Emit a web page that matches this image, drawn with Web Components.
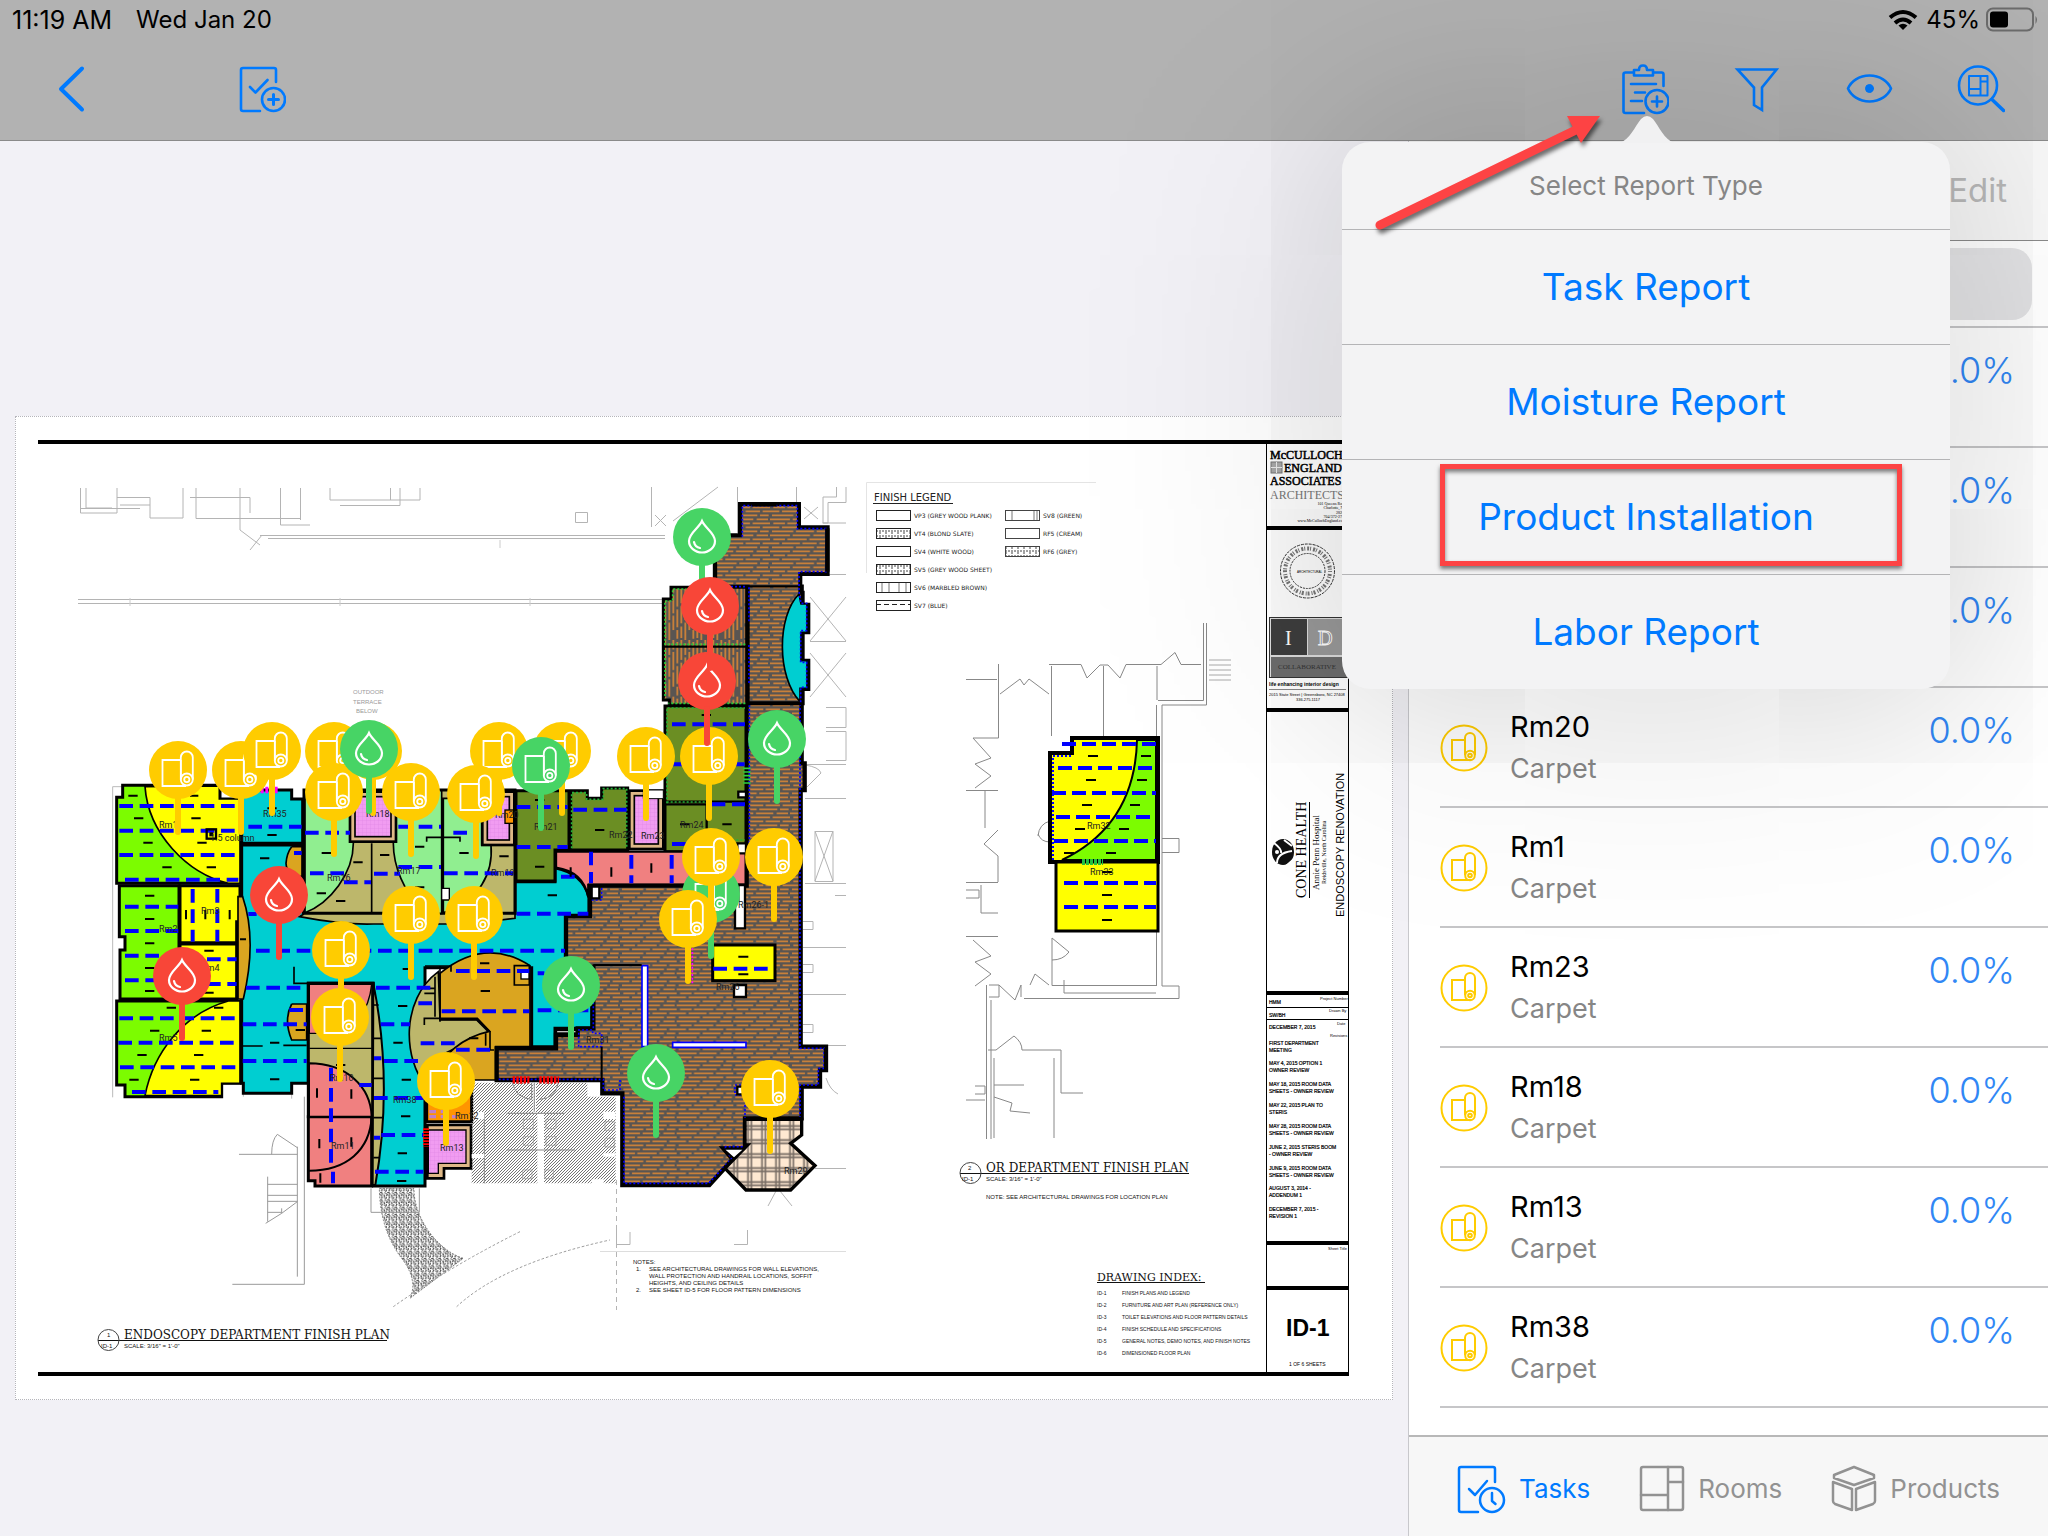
<!DOCTYPE html>
<html lang="en">
<head>
<meta charset="utf-8">
<title>Floor plan tasks</title>
<style>
html,body{margin:0;height:100%}
body{font-family:Inter,"Liberation Sans",sans-serif;background:#f2f1f6;overflow:hidden}
</style>
</head>
<body>
<app-shell></app-shell>
<script>
const define=(name,html,setup)=>customElements.define(name,class extends HTMLElement{
  constructor(){super();this.attachShadow({mode:'open'});}
  connectedCallback(){this.shadowRoot.innerHTML='<style>*,*::after{box-sizing:border-box}button{font:inherit;color:inherit;background:none;border:0;padding:0;margin:0}svg{display:block}</style>'+(typeof html==='function'?html(this):html);if(setup)setup(this);}
});

/* ---------- status bar ---------- */
define('status-bar',`<style>
:host{display:flex;align-items:center;height:40px;padding:0 10px 0 12px;font-size:24px;line-height:40px;color:#000}
.time{font-size:25px}
.date{margin-left:24px}.gap{flex:1}.pct{margin:0 6px 0 8px}
</style>
<span class="time">11:19 AM</span><span class="date">Wed Jan 20</span><span class="gap"></span>
<svg width="30" height="22" viewBox="0 0 30 22" fill="none" stroke="#000" stroke-width="4"><path d="M2 8.5Q15-2.5 28 8.5"/><path d="M7 14Q15 7 23 14"/><path d="M15 21l-4.500-4.500Q15 13 19.500 16.500Z" fill="#000" stroke="none"/></svg>
<span class="pct">45%</span>
<svg width="52" height="26" viewBox="0 0 52 26"><rect x="1" y="1.500" width="46" height="22" rx="6" fill="none" stroke="#6c6c6c" stroke-width="2"/><rect x="4" y="4.500" width="18" height="16" rx="3"/><path d="M49.500 9q3 3.500 0 8z" fill="#6c6c6c"/></svg>`);

/* ---------- tool bar ---------- */
define('tool-bar',`<style>
:host{display:flex;align-items:center;height:101px;padding:0 43px 2px 49px;border-bottom:1px solid #8a8a8a}
button{width:48px;height:56px}
button+button{margin-left:64px}
.add{margin-left:141px!important}.gap{flex:1}.rep{margin-left:0!important}
svg{fill:none;stroke:#007aff;stroke-width:2.6;stroke-linejoin:round;stroke-linecap:round}
</style>
<button aria-label="Back"><svg width="48" height="56" viewBox="50 61 48 56" stroke-width="4"><path stroke-width="4" d="M83 68.500 62 89l21 20.500"/></svg></button>
<button class="add" aria-label="Add task"><svg width="48" height="56" viewBox="238 61 48 56"><path d="M276 82V70q0-2-2-2H243q-2 0-2 2v39q0 2 2 2h17M250 87l5.500 5.500L267.500 80"/><circle cx="273.500" cy="99.500" r="11.500"/><path d="M273.500 94.500v10M268.500 99.500h10" stroke-width="3"/></svg></button>
<span class="gap"></span>
<button class="rep" aria-label="Create report"><svg width="48" height="56" viewBox="1621 61 48 56"><path d="M1634 72.500h-8.500q-2 0-2 2V111q0 2 2 2h18.500M1654 72.500h7.500q2 0 2 2V86M1634 70h5q0-4.500 4-4.500t4 4.500h6v5.500h-19zM1631 84h25M1635 92.500h10M1631 101h11"/><circle cx="1657" cy="101.500" r="11.500"/><path d="M1657 96.500v10M1652 101.500h10"/></svg></button>
<button aria-label="Filter"><svg width="48" height="56" viewBox="1733 61 48 56"><path stroke-linejoin="miter" d="M1737.500 69.500h39L1762 87.500V110l-8-5V87.500z"/></svg></button>
<button aria-label="Visibility"><svg width="48" height="56" viewBox="1845 61 48 56"><path d="M1848 88.500c3-7 11-13 21.500-13s18.500 6 21.500 13c-3 7-11 13-21.500 13s-18.500-6-21.500-13z"/><circle cx="1869.500" cy="88.500" r="4" fill="#007aff" stroke-width="1"/></svg></button>
<button aria-label="Search plan"><svg width="48" height="56" viewBox="1957 61 48 56"><circle cx="1978" cy="85.500" r="19"/><path d="m1992 99.500 11.500 11" stroke-width="3.500"/><path stroke-width="2" d="M1969 76h18.500v19.500H1969zM1980.500 76v19.500M1969 89h11.500M1980.500 81.500h7"/></svg></button>`);

/* ---------- floor plan ---------- */
const T=(x,y,s,t,a='')=>`<text x="${x}" y="${y}" font-size="${s}" ${a}>${t}</text>`;
/* glyph, colour, x, y — in stacking order; "s" redraws only the stem */
const pins=[
'd g 702 537','d r 707 681','r y 178 770','r y 241 770','r y 272 751','r y 334 751','r y 373 751','r y 334 792','r y 411 792','d g 369 749',
'r y 499 751','r y 562 751','r y 476 794','r g 541 766','r y 646 756','r y 709 756','d g 777 739','r g 711 894','r y 711 857','r y 688 919','r y 774 857',
'r y 411 915','r y 474 915','d r 279 895','d r 182 976','r y 341 950','r y 340 1017','r y 446 1081','d g 571 985','d g 656 1073','r y 770 1089','s r 707 681','d r 710 606'
].map(p=>p.split(' '));
const pinColor={g:'#47d465',r:'#f84638',y:'#ffcc00'};
const pinSvg=pins.map(([k,c,x,y])=>{
  const col=pinColor[c],stem=`<path d="M0 28V62" stroke="${col}" stroke-width="6" stroke-linecap="round"/>`;
  const glyph=k==='r'?'<use href="#roll"/>':'<use href="#drop"/>';
  return `<g transform="translate(${x} ${y})">${stem}${k==='s'?'':`<circle r="29" fill="${col}"/>${glyph}`}</g>`;
}).join('');
const pink=(x,y,w,h)=>`<rect x="${x}" y="${y}" width="${w}" height="${h}" fill="#deb887" stroke="#000" stroke-width="8"/><rect x="${x+15}" y="${y+15}" width="${w-30}" height="${h-30}" fill="url(#pk)" stroke="#000" stroke-width="5"/>`;

/* rooms are drawn at three units per sheet pixel */
const rooms=`<g transform="translate(90 700) scale(.33333)" stroke-linejoin="miter">
<g fill="none" stroke="#bbb" stroke-width="3"><path d="M68 260V1192M68 260H180M460 1150V1190M605 1180V1196"/></g>
<g stroke="#000" stroke-width="9">
<path fill="#00ced1" d="M455 435H640V640H1275V545H1395V503Q1480 520 1497 592V648H1428V800H1505V985H1395V1040H1325V803H1005V1458H850V850H655V1150H605V1180H460V1150H455Z"/>
<path fill="#7cfc00" d="M98 256H390V297H450V550H80V292H98Z"/><path fill="#ff0" d="M165 260C175 400 290 520 415 550H450V297H388V258Z" stroke-width="5"/>
<path fill="#7cfc00" d="M88 557H267V897H90V750H105V710H88Z"/>
<path fill="#ff0" d="M270 557H450V665H440V728H270ZM270 732H440V897H270Z"/>
<path fill="#7cfc00" d="M90 903H450V1150H395V1190H105V1155H80V903Z"/><path fill="#ff0" d="M165 1187C190 1060 280 940 415 903H450V1150H395V1187Z" stroke-width="5"/>
<path fill="#00ced1" d="M455 298V270H605V297H638V430H455Z"/>
<path fill="#bdb76b" d="M642 270H1275V640H642Z"/>
<path fill="#bdb76b" d="M628 650Q760 675 850 672H1130L1275 655V642H642Z" stroke-width="5"/>
<path fill="#90ee90" stroke-width="5" d="M645 272H790V430C790 520 720 610 645 638ZM915 272H1055V640H1000C940 570 910 500 910 430ZM1060 295H1175V435H1203C1210 520 1170 600 1060 638Z"/>
<path fill="none" stroke-width="5" d="M845 430V640M1010 425V412H1110V425"/>
<path fill="#fff" stroke-width="4" d="M1055 565H1078V600H1055Z"/>
<path fill="#daa520" stroke-width="5" d="M605 440H636V530Q590 530 588 490 590 460 605 440M444 590H458Q502 720 460 897H444ZM605 912H650V1020H605Q580 960 605 912"/>
<path fill="#bdb76b" d="M655 850H848V1250H655Z"/><path fill="#f08080" stroke-width="4" d="M658 853H845Q835 950 760 1000H658Z"/>
<path fill="#f08080" d="M655 1250H845V1458H675V1442H655Z"/><path fill="#f08080" stroke-width="6" d="M657 1090C770 1090 842 1160 845 1250H657Z"/><path fill="none" stroke-width="6" d="M845 1250C840 1350 770 1412 657 1412"/>
<path d="M658 1045H845" stroke-width="4"/>
<path fill="#bdb76b" stroke-width="6" d="M850 850Q910 1150 856 1455H848Z"/><path stroke-width="5" d="M850 915h16M850 1015h25M850 1135h30M850 1253h27M850 1373h20"/>
<path fill="#bdb76b" stroke-width="5" d="M1045 815C930 900 940 1080 1010 1160L1065 1060 1195 995 1160 960H1050Z"/>
<path fill="#daa520" stroke-width="5" d="M1050 820Q1185 710 1320 797V1040H1217V1140H1020Q1080 1020 1198 994L1160 958H1050Z"/>
<path fill="none" stroke-width="5" d="M1005 798H1083V815M1003 975V955H1162L1200 995V1050H1212M1035 830V950M1050 800V965M1187 1037V1000M1273 797H1318V855H1273ZM1003 880h30M1003 865h30M612 800V850H655M458 1038h60M580 1036h70"/>
<rect x="1293" y="815" width="24" height="22" fill="#fff" stroke-width="4"/>
<path fill="#ff9500" d="M1010 1150H1145V1265H1010Z"/><path fill="none" stroke="#c080c8" stroke-width="10" stroke-dasharray="20 14" d="M1018 1250H1100M1018 1235H1070"/>
<path fill="#deb887" stroke-width="8" d="M1012 1275H1143V1405H1062V1435H1012Z"/><path fill="url(#pk)" stroke-width="4" d="M1015 1290H1128V1390H1045V1420H1015Z"/>
${pink(780,275,138,150)}${pink(1177,275,96,160)}<rect x="1245" y="330" width="26" height="40" fill="#ff9500" stroke-width="4"/>
</g>
<g transform="translate(1080 0)" stroke="#000" stroke-width="9">
<path fill="#6b8e23" d="M198 272H357V450H315V543H198ZM362 272H412V295H455V264H533V450H362ZM645 18H890V455H645Z"/>
<path fill="#f08080" d="M318 455H890V555H415V592Q400 515 318 503Z" stroke-width="7"/>
<path fill="none" stroke-width="7" d="M645 313H770V450M645 305H888"/>
${pink(538,272,102,175)}<path fill="#fff" stroke-width="3" d="M580 270H640V296H580Z"/>
<path fill="url(#wood)" stroke-width="13" d="M890-340H1055V190H1064V270H1052V1040H1128V1110H1110V1160H1055V1255H885V1345H820L848 1378 778 1455H517V1180H457V1140H140V1045H318V1005H383V985H430V800H348V648H420V557H890Z"/>
<path fill="none" stroke="#00f" stroke-width="5" stroke-dasharray="6 6" d="M898-340V-30M1050-300V1045H1122V1105H1105V1155H1050V1250M885 1155H855V1185H885V1340H822L845 1376 776 1450H522V1185M510 1140V1170H460V1138H145M386 1040V990H428V1000H455V1040H386M898 465V10M425 600H455V560M430 985V890"/>
<path fill="#fff" stroke-width="7" d="M425 560H448V595H425ZM852 855H888V891H852ZM865 555H885V685H855V600H865ZM865 275H888V292H865ZM862 430H888V460H862ZM318 990H380V1000H318ZM862 1160H885V1183H862Z"/>
<path fill="#fff" stroke="#00f" stroke-width="5" d="M576 797H593V1040H576ZM668 1027H888V1042H668Z"/>
<rect x="788" y="735" width="187" height="107" fill="#ff0"/>
<path fill="url(#plaid)" stroke-width="10" d="M885 1258H1055V1305L1022 1330 1095 1397 1022 1470H888L825 1405 893 1335H885Z"/>
<path fill="#fff" stroke-width="5" d="M820 1347H883L852 1375Z"/>
<path fill="none" stroke-width="6" d="M430 795H575M455 1040V1140M1125 1045V1110"/>
<path fill="none" stroke="#22b33a" stroke-width="5" stroke-dasharray="6 6" d="M651 310V24H885M365 445V278H410V298H460V266H530V445M650 306H770M775 420H885"/>
<path fill="none" stroke="#2bd13f" stroke-width="5" d="M880 205h22M880 216h22M880 227h22M880 238h22M880 249h22"/>
<path stroke="#f0f" stroke-width="5" stroke-dasharray="6 5" d="M727 745V852"/>
<path stroke="red" stroke-width="22" stroke-dasharray="7 4" d="M188 1140H238M268 1140H327"/>
<path fill="url(#hatch)" stroke="none" d="M65 1148H250V1238H262V1450H65ZM258 1148H412V1190H497V1450H282V1240H258Z"/>
<path fill="none" stroke="#888" stroke-width="3" d="M170 1240H345M170 1350H375M103 1240V1450M253 1148V1235M187 1150Q200 1195 245 1198V1150M325 1150Q315 1195 270 1198"/>
<path fill="none" stroke="#999" stroke-width="2" d="M220 1258h30v28h-30zM288 1258h30v28h-30zM220 1310h30v26h-30zM288 1310h30v26h-30zM465 1265h28v26h-28zM465 1315h28v26h-28zM218 1410h28v26h-28zM284 1410h26v26h-26z"/>
<path fill="#fff" stroke="none" d="M75 1236h28v22H75zM65 1362h38v12H65zM460 1235h36v22h-36zM460 1360h36v10h-36zM425 1438h36v14h-36z"/>
</g>
<g transform="translate(1530 -690)" stroke="#000" stroke-width="12">
<path fill="url(#wood)" d="M420 102H597V172H683V312H601V368H608V404H625V487H608V572H625V657H608V700H443V350H345V196H420Z"/>
<path fill="url(#woodv)" d="M213 352H440V705H208V690H190V387H213Z" stroke-width="9"/>
<path d="M190 530H440M345 349H600" stroke-width="7"/>
<path fill="#00ced1" stroke-width="5" d="M597 372C530 440 530 620 600 695V655H621V572H603V487H621V402H603Z"/>
<path fill="none" stroke="#00f" stroke-width="5" stroke-dasharray="6 6" d="M427 200V107H592V176H678V305H597V365L603 400H620V482H602V577H620V652H602V700M447 352V460M447 525V640M345 350H440"/>
<path fill="none" stroke="#22d13a" stroke-width="5" stroke-dasharray="6 6" d="M436 523H195V393H218V357H260M436 700H205M195 540V685"/>
<path d="M682 175V305M345 280V345M455 103H530" stroke-width="13"/>
</g>
<path fill="none" stroke="#00f" stroke-width="12" stroke-dasharray="41 20" d="M88 318H445M88 392H445M88 465H445M105 539H445M105 620H265M105 693H265M105 767H265M105 841H265M308 567V725M382 567V725M290 778H440M290 852H440M88 955H448M85 1028H448M90 1102H448M126 1176H385M475 380H635M612 459H635M645 398H780M660 520H775M762 547H843M852 521H930M925 380H1053M925 501H1053M1062 520H1270M1090 398H1160M475 642H500M1280 641H1495M498 752H1425M468 863H650M858 863H1040M598 930H650M458 973H650M458 1083H650M872 973H960M1098 813H1318M1055 934H1318M985 910H1030M992 1030H1100M1098 1049H1216M882 1083H985M852 1194H1000M874 1305H1000M855 1415H1000M723 1103V1400M729 1415V1450M808 1155H845M852 1075h22M852 1313h18M1280 321H1433M1280 441H1433M1450 329H1610M1746 73H1965M1740 193H1965M1865 313H1965M1746 432H1800M1503 455V550M1624 465V550M1745 465V550M1343 820H1363M1343 931H1495M1413 530H1460M1870 806H2052"/>
<path fill="none" stroke="#000" stroke-width="6" d="M115 287h28M300 287h25M132 355h28M304 355h28M160 428h28M322 428h28M217 502h28M350 502h28M165 587h28M165 657h28M165 730h28M165 804h28M165 873h28M288 630v28M346 630v28M419 630v28M343 752h28M343 878h28M230 923h28M372 923h28M180 992h28M335 992h28M142 1065h28M312 1065h28M118 1139h28M300 1139h28M532 325h28M532 405h28M510 475h28M695 459h28M680 580h28M790 487h28M738 603h28M870 465h28M975 440h28M975 562h28M1108 459h28M1228 469h28M450 718h18M617 990h28M540 1028h28M540 1138h28M938 807h28M924 918h28M910 1028h28M935 1139h28M933 1249h28M923 1360h28M921 1443h28M681 1165v28M784 1168v28M688 1317v28M784 1312v28M691 1420v28M1170 790h28M1172 873h28M1137 1015h28M738 1095h28M1335 300h28M1335 500h28M1373 586h28M1515 390h28M1835 45h28M1897 373h28M1770 373h28M1564 502v28M1684 490v28M1442 502v28M1945 770h30M1945 823h30"/>
<rect x="350" y="388" width="28" height="28" fill="none" stroke="#000" stroke-width="7"/><path d="M358 397h12v12h-12z"/>
<path stroke="#f0f" stroke-width="20" stroke-dasharray="9 5" d="M512 270H565"/><path stroke="red" stroke-width="18" stroke-dasharray="5 4" d="M1008 1285V1340"/>
<g transform="translate(0 1050)" fill="none" stroke="#999" stroke-width="3">
<path fill="url(#speck)" stroke="#777" stroke-dasharray="5 5" d="M868 415H972C970 500 1040 600 1120 625L960 745Q985 690 935 625 870 540 868 415Z"/>
<path d="M643 140V703H427M622 290V680M447 313H622M545 313Q545 270 562 253L622 293M533 380V515M533 403H622M533 436H622M533 454H622M527 520 575 490V475M575 490 622 455M533 487H575M843 415V487H988V415"/>
<path stroke-dasharray="8 6" d="M910 770Q1080 650 1290 545M1100 770Q1240 640 1560 570"/>
</g>
</g>`;

const plan2=`<g fill="none" stroke="#888" stroke-width="1">
<path d="M998.500 664V738H973M966 679.500H997M1000 694l20-15 4 6 5-6 20 15M1049 664.500H1081L1087 678 1100 665H1108L1120 678 1126 664.500H1161l14-12 6 12h20M1051.500 666V736M1103.500 666V737M1157 666V700M1203.500 623V700.500H1158M1206.500 623V705H1162V986H1179V998.500H1024M1156.500 705V738M1156.500 932V986M1162 838.500h17v14h-17M973 738l18 20-16 6 16 12-16 12M966 790.500h32M985 791v37M998 830l-14 14 14 12v26M966 882.500h32M966 890h13v8h-13M981 885v28h17M966 936.500h32M973 940l18 16-16 6 16 12-16 12M986.500 985V1139M991 1000V1139M989 985h10v12h-10M999 985 1015 1000 1021 985V997M1030 985l5-11 14 11M1052 938V985.500H1156M1052 938l17 14q-6 8-17 8M1064 980v13h92M988 1050h8l18-14q8 6 8 14h39v43h22M1054 1058v80M994 1058v80M994 1085h30M966 1100h19M994 1097l18 6-2 8 20 2M975 1086h10v8h-10M1038 836q1-12 12-15M1038 834q3 8 12 8"/>
<path stroke="#aaa" d="M1209 660h22M1209 665h22M1209 670h22M1209 675h22M1209 680h22"/></g>
<path fill="#ff0" stroke="#000" stroke-width="4" d="M1072 738H1158V862H1050V753H1072Z"/><path fill="#7cfc00" stroke="#000" stroke-width="2" d="M1137 740H1156V860H1062Q1135 825 1137 740"/>
<path fill="#ff0" stroke="#000" stroke-width="3" d="M1056 862H1158V931H1056Z"/>
<path stroke="#00f" stroke-width="4" stroke-dasharray="14 6" d="M1062 744H1156M1058 768H1156M1052 793H1156M1056 817H1156M1054 841H1156M1064 883H1156M1064 907H1156"/>
<path fill="none" stroke="#00f" stroke-width="2" stroke-dasharray="2 2" d="M1053 860V756H1073"/><path d="M1082 862H1103" stroke="#22c040" stroke-width="6" stroke-dasharray="3 1"/>
<path stroke="#000" stroke-width="2" d="M1088 756h10M1141 756h10M1086 780h10M1137 780h10M1082 805h10M1130 805h10M1075 829h10M1119 829h10M1064 853h10M1106 853h10M1102 872h10M1102 895h10M1102 920h10"/>`;

const linework=`<g fill="none" stroke="#b4b4b4" stroke-width="1">
<path d="M80.500 488V513H117V488M86 488V508H112M117 497.500H150V518H183V488M120 505H150M190 497.500H250V513M196 488V518.500H300M240 488V530L260 545M280.500 488V525H310M80 508.500H140M300.500 488V520M330 488V500H420V488M340 505.500H400V488M260 535.500H665M268 538.500H665M250 550 262 535M575.500 512.500h12v10h-12zM390.500 488V500M78 599.500H662M78 603.500H662"/>
<path stroke="#ccc" d="M500 540v8M130 598v8M340 598v8M530 598v8"/>
<path d="M651.500 487V527M737.500 487V533M673 521 718 487M655 515l11 11M666 515l-11 11M796.500 487V520M804 507l14 12M818 507l-14 12M822.500 523H828V502.500H846V487M836.500 487V497H823V523H846M828 574.500H846M810 597l36 44M846 597l-36 44M810 641.500h36M810 653l36 44M846 653l-36 44M826 707.500h20v20h-20M826 731.500h20v29h-20M805 764.500H846M805 765q14 2 16 8l-14 14M805 798.500H846M815 831.500h18v50h-18zM815 831l18 50M833 831l-18 50M805 883.500H846M835 895.500H846M803 921.500h10v8h-10M803 947.500H846M803 964.500h10v8h-10M803 994.500H846M803 1024.500h10v8h-10M803 1045.500H846M826 1078q4 12 12 16M815 1168.500H846M768 1206l8-15M792 1206l-12-15"/>
<path d="M616.500 1230V1244.500H630V1232M734 1244.500h13.500V1230"/><path stroke="#ddd" d="M600 1251.500H846"/><path stroke-dasharray="5 4" d="M616.500 1180V1310"/>
</g>`;

const legend=[['VP3 (GREY WOOD PLANK)','sp'],['VT4 (BLOND SLATE)','sk'],['SV4 (WHITE WOOD)',''],['SV5 (GREY WOOD SHEET)','sk'],['SV6 (MARBLED BROWN)','v'],['SV7 (BLUE)','h']]
 .map(([t,k],i)=>{const y=511+i*18;return `<rect x="876.500" y="${y-.5}" width="34" height="10" fill="${k==='sk'?'url(#speck2)':'none'}" stroke="#222"/>`+(k==='h'?`<path d="M876 ${y+3.5}h34" stroke="#222" stroke-dasharray="5 3"/>`:k==='v'?`<path d="M882 ${y}v9M889 ${y}v9M899 ${y}v9M906 ${y}v9" stroke="#777"/>`:'')+T(914,y+7,6,t);}).join('')
 +['SV8 (GREEN)','RF5 (CREAM)','RF6 (GREY)'].map((t,i)=>{const y=511+i*18;return `<rect x="1005.500" y="${y-.5}" width="34" height="10" fill="${i===2?'url(#speck2)':'none'}" stroke="#444"/>`+(i===0?`<path d="M1012 ${y}v9M1034 ${y}v9M1037 ${y}v9" stroke="#777"/>`:'')+T(1043,y+7,6,t);}).join('');

const labels=[['Rm1',159,828],['1.5 column',210,841],['Rm2',159,932],['Rm3',201,914],['Rm4',201,971],['Rm5',159,1041],['Rm35',263,817],['Rm18',366,817],['Rm16',327,881],['Rm17',397,874],['Rm10',330,1081],['Rm11',331,1149],['Rm38',393,1103],['Rm12',455,1119],['Rm13',440,1151],['Rm19',491,876],['Rm20',495,818],['Rm21',534,830],['Rm22',609,838],['Rm23',641,839],['Rm24',680,828],['Rm26-1',738,908],['Rm26',716,990],['Rm31',586,1043],['Rm29',784,1174],['Rm32',1087,829],['Rm33',1090,875]]
 .map(([t,x,y])=>T(x,y,9,t,'font-family="Roboto,sans-serif" fill="#222"')).join('');

const dates=[['HMM',1004],['SW/BH',1017],['DECEMBER 7, 2015',1029],['FIRST DEPARTMENT',1045],['MEETING',1052],['MAY 4, 2015  OPTION 1',1065],['OWNER REVIEW',1072],['MAY 18, 2015  ROOM DATA',1086],['SHEETS - OWNER REVIEW',1093],['MAY 22, 2015  PLAN TO',1107],['STERIS',1114],['MAY 28, 2015  ROOM DATA',1128],['SHEETS - OWNER REVIEW',1135],['JUNE 2, 2015  STERIS BOOM',1149],['- OWNER REVIEW',1156],['JUNE 9, 2015  ROOM DATA',1170],['SHEETS - OWNER REVIEW',1177],['AUGUST 3, 2014 -',1190],['ADDENDUM 1',1197],['DECEMBER 7, 2015 -',1211],['REVISION 1',1218]]
 .map(([t,y])=>T(1269,y,5,t,'stroke="#000" stroke-width=".2"')).join('');

const block=`<g stroke="#000" fill="none"><path stroke-width="4" d="M38 442H1349M38 1374H1349M1266 528H1349M1266 710H1349M1266 993H1349M1266 1243H1349M1266 1288H1349"/><path d="M1266.500 442V1375M1348.500 442V1375M1267 1007.500H1348M1267 1019.500H1348"/></g>
<g font-family="'Liberation Serif',serif" stroke="#000" stroke-width=".5">${T(1270,459,12,'McCULLOCH')}${T(1284,472,12,'ENGLAND')}${T(1270,485,12,'ASSOCIATES')}</g>${T(1270,499,12,'ARCHITECTS','font-family="Liberation Serif" fill="#777"')}
<rect x="1271" y="462" width="11" height="11" fill="#aaa" stroke="#777"/><path d="M1276.500 462v11M1271 467.500h11" stroke="#eee"/>
<g font-family="'Liberation Serif',serif" text-anchor="end">${T(1346,505,4,'101 Queens Road')}${T(1346,509,4,'Charlotte, NC')}${T(1346,514,4,'28204')}${T(1346,518,4,'704/372-2740')}${T(1346,522,4,'www.McCullochEngland.com')}</g>
<g fill="none" stroke="#333"><circle cx="1307.500" cy="571" r="27" stroke-dasharray="3 1"/><circle cx="1307.500" cy="571" r="22.500" stroke-width="4" stroke="#777" stroke-dasharray="1 2 2 1"/><circle cx="1307.500" cy="571" r="17.500" stroke-dasharray="2 1"/></g>${T(1297,573,3,'ARCHITECTURAL')}
<rect x="1269.500" y="617.500" width="79" height="60" fill="#ddd" stroke="#333"/><rect x="1271" y="619" width="36" height="36" fill="#3e3e3e"/><rect x="1308" y="619" width="40" height="36" fill="#9a9a9a"/><rect x="1271" y="657" width="77" height="20" fill="#6d6d6d"/>
<g font-family="'Liberation Serif',serif">${T(1285,645,20,'I','fill="#fff"')}${T(1318,645,20,'D','fill="#777" stroke="#fff"')}${T(1278,669,7,'COLLABORATIVE','fill="#333"')}</g>
${T(1269,686,5,'life enhancing interior design','font-family="Liberation Sans" font-weight="bold"')}<path d="M1269 689.500h77" stroke="#888"/>${T(1269,696,4,'2015 State Street | Greensboro, NC 27408')}${T(1296,701,4,'336.275.1117')}
<g font-family="'Liberation Serif',serif"><text transform="translate(1306 898) rotate(-90)" font-size="14">CONE HEALTH</text><text transform="translate(1319 890) rotate(-90)" font-size="9">Annie Penn Hospital</text><text transform="translate(1326 884) rotate(-90)" font-size="6">Reidsville, North Carolina</text></g><path d="M1309.500 802V898" stroke="#000"/>
<text transform="translate(1344 917) rotate(-90)" font-size="11" font-family="Liberation Sans">ENDOSCOPY RENOVATION</text>
<ellipse cx="1283" cy="852" rx="11" ry="13" fill="#111"/><path d="M1274 843q8 6 7 10M1277 863q0-10 15-12M1284 840l8 6M1286 866l8-7" stroke="#fff" stroke-width="2" fill="none"/><circle cx="1277" cy="852" r="2" fill="#fff"/>
<g font-family="'Liberation Sans',sans-serif">${dates}${T(1320,1000,4,'Project Number')}${T(1329,1012,4,'Drawn By')}${T(1337,1025,4,'Date')}${T(1330,1037,4,'Revisions')}${T(1328,1250,4,'Sheet Title')}
${T(1286,1336,23,'ID-1','font-weight="bold"')}${T(1289,1366,5,'1  OF  6  SHEETS')}</g>`;

const index=['FINISH PLANS AND LEGEND','FURNITURE AND ART PLAN (REFERENCE ONLY)','TOILET ELEVATIONS AND FLOOR PATTERN DETAILS','FINISH SCHEDULE AND SPECIFICATIONS','GENERAL NOTES, DEMO NOTES, AND FINISH NOTES','DIMENSIONED FLOOR PLAN']
 .map((t,i)=>T(1097,1295+i*12,5,'ID-'+(i+1))+T(1122,1295+i*12,5,t)).join('');

define('floor-plan',`<style>:host{display:block}svg{width:100%;height:auto;background:#fff;outline:1px dotted #b5b5bb;outline-offset:-1px}</style>
<svg viewBox="15 416 1378 984" role="img" aria-label="Finish plan" font-family="'Liberation Sans',sans-serif">
<defs>
<pattern id="wood" width="170" height="48" patternUnits="userSpaceOnUse"><rect width="170" height="48" fill="#595552"/><path stroke="#c9803a" stroke-width="5.500" d="M0 4H60M68 4H120M130 4H164M10 16H45M52 16H110M118 16H170M0 28H28M36 28H90M97 28H140M148 28H170M6 40H70M78 40H132M140 40H166"/></pattern>
<pattern id="woodv" width="48" height="170" patternUnits="userSpaceOnUse"><rect width="48" height="170" fill="#595552"/><path stroke="#c9803a" stroke-width="5.500" d="M4 0V60M4 68V120M4 130V164M16 10V45M16 52V110M16 118V170M28 0V28M28 36V90M28 97V140M40 6V70M40 78V132M40 140V166"/></pattern>
<pattern id="plaid" width="42" height="42" patternUnits="userSpaceOnUse" x="8" y="14"><rect width="42" height="42" fill="#ffe9d2"/><path d="M4 0V42M14 0V42M0 4H42M0 14H42" stroke="#554c48" stroke-width="5" opacity=".8"/></pattern>
<pattern id="pk" width="12" height="12" patternUnits="userSpaceOnUse"><rect width="12" height="12" fill="#f19cf1"/><path d="M0 0H12M0 0V12" stroke="#e088e4" stroke-width="2"/></pattern>
<pattern id="hatch" width="9" height="9" patternUnits="userSpaceOnUse"><path d="M-1 10 10-1" stroke="#555" stroke-width="2.500"/></pattern>
<pattern id="speck" width="22" height="22" patternUnits="userSpaceOnUse"><path d="M2 3h3M9 1v4M15 5h4M4 10l3 2M12 10h3M19 12v4M1 17h4M9 16l3 3M15 19h4M13 14v2M6 6h3M17 1h3M8 13h2M2 21h3M16 9l2 2" stroke="#111" stroke-width="3"/></pattern>
<pattern id="speck2" width="6" height="5" patternUnits="userSpaceOnUse"><path d="M0 1h2M3 3h2M4 0v2" stroke="#444"/></pattern>
<g id="roll" fill="none" stroke="#fff" stroke-width="1.800"><path d="M3-10H-15.500V16H8M3-10V9M2.800 9.500V-12.500a6 6 0 0 1 12 0V9.500"/><circle cx="8.800" cy="9.500" r="6"/><circle cx="8.800" cy="9.500" r="2.600"/></g>
<g id="drop" fill="none" stroke="#fff" stroke-width="2.200" stroke-linecap="round"><path d="M0-16C3-9 13-4 13 4A13 11.500 0 0 1-13 4C-13-4-3-9 0-16Z" /><path d="M-8 5Q-7 10-2 11"/></g>
</defs>
${linework}${rooms}${plan2}
<g>${T(353,694,6,'OUTDOOR','fill="#999"')}${T(353,704,6,'TERRACE','fill="#999"')}${T(356,713,6,'BELOW','fill="#999"')}</g>
<path d="M866.500 573V482.500H1096" fill="none" stroke="#e4e4e4"/>
<g font-family="'DejaVu Sans',sans-serif" fill="#222">${T(874,501,10,'FINISH LEGEND')}${legend}</g><path d="M873 503.500h80" stroke="#222"/>
<g fill="#111"><g font-family="'DejaVu Serif',serif">${T(986,1172,12,'OR DEPARTMENT FINISH PLAN')}${T(124,1339,12,'ENDOSCOPY DEPARTMENT FINISH PLAN')}${T(1097,1281,11,'DRAWING INDEX:')}</g>
<path d="M960 1173.500H1189M98 1340.500H387M1097 1282.500h108" stroke="#111"/><g fill="none" stroke="#444"><circle cx="970.500" cy="1173" r="10.500"/><circle cx="108.500" cy="1340" r="10.500"/></g>
${T(968,1170,6,'2')}${T(962,1181,6,'ID-1')}${T(107,1337,6,'1')}${T(101,1348,6,'ID-1')}
${T(986,1181,6,'SCALE: 3/16&quot; = 1&apos;-0&quot;')}${T(986,1199,6,'NOTE: SEE ARCHITECTURAL DRAWINGS FOR LOCATION PLAN')}${T(124,1348,6,'SCALE: 3/16&quot; = 1&apos;-0&quot;')}
${T(633,1264,6,'NOTES:')}${T(636,1271,6,'1.')}${T(649,1271,6,'SEE ARCHITECTURAL DRAWINGS FOR WALL ELEVATIONS,')}${T(649,1278,6,'WALL PROTECTION AND HANDRAIL LOCATIONS, SOFFIT')}${T(649,1285,6,'HEIGHTS, AND CEILING DETAILS')}${T(636,1292,6,'2.')}${T(649,1292,6,'SEE SHEET ID-5 FOR FLOOR PATTERN DIMENSIONS')}
${index}</g>
${block}${labels}${pinSvg}
</svg>`);

/* ---------- side panel ---------- */
define('task-row',el=>`<style>
:host{display:flex;align-items:flex-start;height:120px;margin-left:31px;padding:18px 33px 0 0;border-bottom:2px solid #c6c6c8}
svg{margin:18px 22px 0 0;fill:none;stroke:#ffcc00;stroke-width:2}
.txt{flex:1}.name,.kind{line-height:42px}.name{font-size:29px;color:#000}.kind{font-size:27px;color:#868686}
.pct{font-size:36px;line-height:48px;font-weight:300;color:#3187f5}
</style>
<svg width="48" height="48" viewBox="-24 -24 48 48"><circle r="22.500"/><path d="M1-8H-12V12H7M1-8V6M1 7V-10a5 5 0 0 1 10 0V7"/><circle cx="6" cy="7.500" r="4.800"/><circle cx="6" cy="7.500" r="1.800"/></svg>
<div class="txt"><div class="name"><slot name="name"></slot></div><div class="kind"><slot></slot></div></div><div class="pct">0.0%</div>`);

define('tab-bar',`<style>
:host{display:flex;align-items:center;height:101px;background:#f7f7f7;border-top:2px solid #b8b8b8;padding:0 48px 0 47px;justify-content:space-between;font-size:26px;color:#929292}
button{display:flex;align-items:center;gap:13px;line-height:32px;padding-top:4px}
svg{fill:none;stroke:currentColor;stroke-width:2.500;stroke-linejoin:round;stroke-linecap:round}
.on{color:#007aff}
</style>
<button class="on"><svg width="50" height="50" viewBox="0 0 50 50"><path d="M39 18V5q0-2-2-2H5Q3 3 3 5v41q0 2 2 2h17M13 25l6 6 12-14"/><circle cx="36" cy="36" r="12"/><path d="M36 29v8l3.500 3"/></svg>Tasks</button>
<button><svg width="46" height="50" viewBox="0 0 46 50"><rect x="2" y="3" width="42" height="43" rx="2"/><path d="M29 3v43M2 31h27M29 18h15"/></svg>Rooms</button>
<button><svg width="46" height="50" viewBox="0 0 46 50"><path d="M23 3 43 11v3L23 21 3 14V11ZM2 18l19 7v21L4 40q-2-1-2-3ZM44 18l-19 7v21l17-6q2-1 2-3Z"/></svg>Products</button>`);

define('task-panel',`<style>
:host{display:flex;flex-direction:column;min-height:0;background:#fff;border-left:1px solid #c8c8cc}
.bar{display:flex;justify-content:flex-end;align-items:center;height:100px;flex:none;padding:0 41px 2px 0;background:#f7f7f7;border-bottom:1px solid #8a8a8a;font-size:33px;color:#b9b9b9}
.search{height:87px;flex:none;padding:7px 16px 0;border-bottom:2px solid #c6c6c8}
input{display:block;width:100%;height:72px;border:0;border-radius:20px;background:#e4e4e6;font:inherit}
.list{flex:1;min-height:0;overflow:hidden}
</style>
<div class="bar"><button>Edit</button></div>
<div class="search"><input type="search" aria-label="Search tasks"></div>
<div class="list">
<task-row></task-row><task-row></task-row><task-row></task-row>
${['Rm20','Rm1','Rm23','Rm18','Rm13','Rm38'].map(n=>`<task-row><span slot="name">${n}</span>Carpet</task-row>`).join('')}
</div>
<tab-bar></tab-bar>`);

/* ---------- popover ---------- */
define('report-popover',`<style>
:host{display:block;width:608px;border-radius:28px;background:#f3f3f4;box-shadow:0 0 280px rgba(0,0,0,.24);text-align:center}
.tip{position:absolute;top:-26px;left:277px}
h2{margin:0;height:87px;line-height:88px;font-size:26px;font-weight:400;color:#868686}
button{position:relative;display:block;width:100%;height:115px;line-height:112px;border-top:1px solid #b4b4b6;font-size:37px;color:#007aff}
.mark::after{content:"";position:absolute;left:98px;top:4px;width:462px;height:102px;border:5px solid #fd4344;box-shadow:0 3px 4px rgba(0,0,0,.5),inset 0 3px 4px rgba(0,0,0,.5)}
.arrow{position:absolute;left:20px;top:-40px;filter:drop-shadow(2px 4px 2px rgba(0,0,0,.55))}
</style>
<svg class="tip" width="56" height="27" viewBox="0 0 56 27"><path fill="#f1f1f2" d="M0 27C11 24 16 10 22 3Q28-3 34 3C40 10 45 24 56 27Z"/></svg>
<h2>Select Report Type</h2>
<button>Task Report</button><button>Moisture Report</button><button class="mark">Product Installation</button><button>Labor Report</button>
<svg class="arrow" width="250" height="140" viewBox="20 -40 250 140"><path d="M38 83 240-15" stroke="#fd4344" stroke-width="9" stroke-linecap="round"/><path d="M225-26H258L239 1Z" fill="#fd4344"/></svg>`);

define('app-shell',`<style>
:host{position:relative;display:grid;grid-template:auto minmax(0,1fr)/minmax(0,1fr) 640px;height:100vh;overflow:hidden;background:#f2f1f6}
header{grid-column:1/-1;background:#b2b2b2}
main{padding:275px 15px 0}
report-popover{position:absolute;top:142px;right:98px}
</style>
<header><status-bar></status-bar><tool-bar></tool-bar></header>
<main><floor-plan></floor-plan></main>
<task-panel></task-panel>
<report-popover></report-popover>`);
</script>
</body>
</html>
